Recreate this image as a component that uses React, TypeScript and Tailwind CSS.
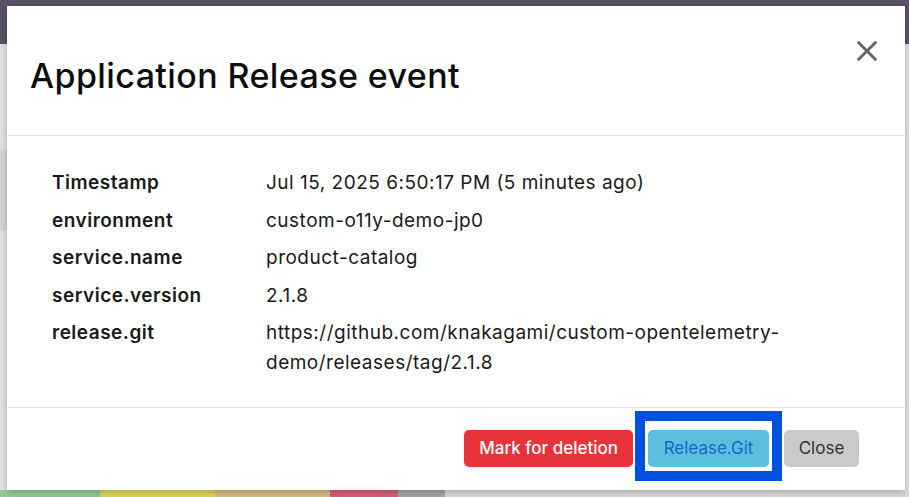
import React from "react";

const rows = [
  { label: "Timestamp", value: "Jul 15, 2025 6:50:17 PM (5 minutes ago)" },
  { label: "environment", value: "custom-o11y-demo-jp0" },
  { label: "service.name", value: "product-catalog" },
  { label: "service.version", value: "2.1.8" },
  {
    label: "release.git",
    value: "https://github.com/knakagami/custom-opentelemetry-demo/releases/tag/2.1.8",
  },
];

const App: React.FC = () => {
  return (
    <div className="relative w-[909px] h-[497px] overflow-hidden bg-[#e4e4e4] font-['Inter',sans-serif]">
      {/* dimmed page behind the dialog */}
      <div className="h-[44px] bg-[#5b5266]" />
      <div className="flex h-[453px]">
        <div className="w-[7px] flex flex-col">
          <div className="h-[106px]" />
          <div className="h-[80px] bg-[#d6d6d6]" />
          <div className="flex-1" />
        </div>
        <div className="flex-1" />
      </div>
      <div className="absolute left-0 right-0 bottom-0 h-[7px] flex">
        <div className="w-[100px] bg-[#93cb98]" />
        <div className="w-[115px] bg-[#dcd75d]" />
        <div className="w-[115px] bg-[#d9c07e]" />
        <div className="w-[68px] bg-[#d5607a]" />
        <div className="w-[47px] bg-[#a8a8a8]" />
        <div className="flex-1 bg-[#dcdcdc]" />
      </div>

      {/* dialog */}
      <div className="absolute left-[7px] top-[6px] w-[898px] h-[484px] bg-white shadow-[0_2px_8px_rgba(0,0,0,0.25)] flex flex-col">
        <div className="relative h-[130px] flex items-center pl-[23px] pt-[10px] border-b border-[#e3e3e3]">
          <h2 className="text-[34px] leading-none font-medium text-[#0d0d0d] tracking-[0.4px]">
            Application Release event
          </h2>
          <button className="absolute right-[27px] top-[34px] w-[22px] h-[22px] text-[#666]" aria-label="Close">
            <svg viewBox="0 0 20 20" className="w-full h-full" fill="none" stroke="currentColor" strokeWidth={2.6} strokeLinecap="square">
              <path d="M2.5 2.5L17.5 17.5M17.5 2.5L2.5 17.5" />
            </svg>
          </button>
        </div>

        <div className="flex-1 pt-[32px] pl-[45px] pr-[60px] text-[19px] tracking-[0.5px] text-[#1a1a1a]">
          {rows.map((r) => (
            <div key={r.label} className="flex leading-[30px] mb-[7.5px]">
              <div className="w-[214px] shrink-0 font-semibold">{r.label}</div>
              <div className="w-[580px]">
                {r.label === "release.git" ? (
                  <>
                    https://github.com/knakagami/custom-opentelemetry-
                    <br />
                    demo/releases/tag/2.1.8
                  </>
                ) : (
                  r.value
                )}
              </div>
            </div>
          ))}
        </div>

        <div className="h-[83px] border-t border-[#e3e3e3] flex items-start justify-end pt-[22px] pr-[46px] gap-[15px] text-[17px]">
          <button className="h-[37px] px-[15px] rounded-[5px] bg-[#e8333a] text-white font-medium">
            Mark for deletion
          </button>
          <span className="relative">
            <span className="absolute -left-[13px] -right-[13px] -top-[19px] -bottom-[14px] border-[10px] border-[#0050e0]" />
            <button className="h-[37px] w-[121px] rounded-[5px] bg-[#5bc0de] text-[#1a64cc]">
              Release.Git
            </button>
          </span>
          <button className="h-[37px] w-[75px] rounded-[5px] bg-[#cacaca] text-[#333]">
            Close
          </button>
        </div>
      </div>
    </div>
  );
};

export default App;
